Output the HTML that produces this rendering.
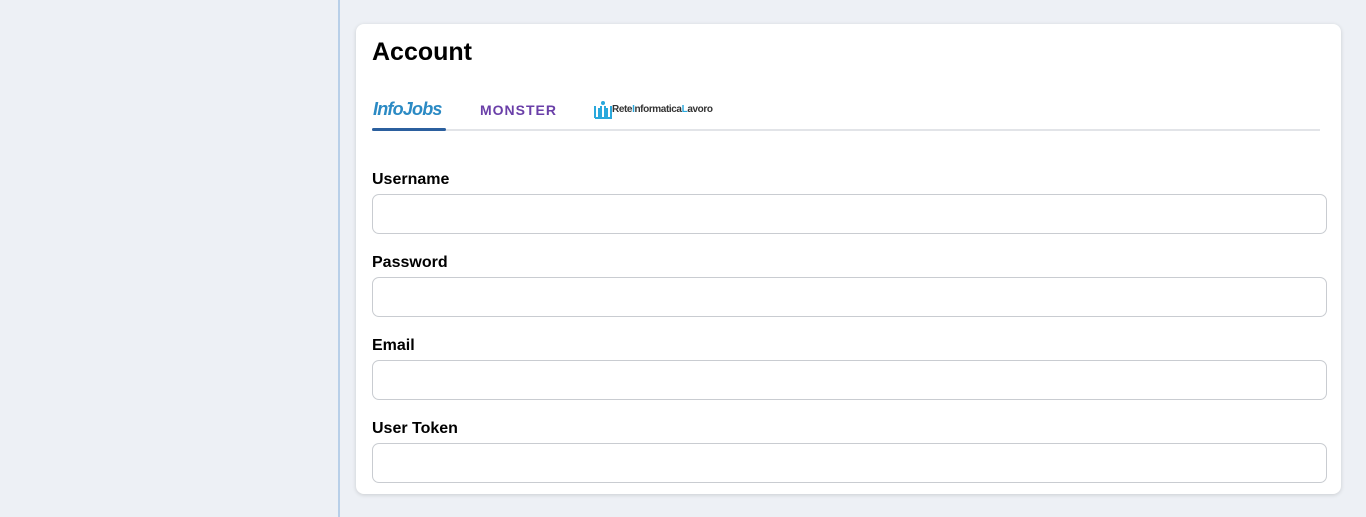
<!DOCTYPE html>
<html><head><style>
body{margin:0;width:1366px;height:517px;background:#edf0f5;font-family:"Liberation Sans",sans-serif;position:relative;overflow:hidden}
.side{position:absolute;left:0;top:0;width:338px;height:517px;background:#edf0f5;border-right:2px solid #b8cfe8}
.card{position:absolute;left:356px;top:24px;width:985px;height:470px;background:#fff;border-radius:8px;box-shadow:0 1px 4px rgba(0,0,0,.15)}
h1{position:absolute;left:16px;top:14px;margin:0;font-size:25px;font-weight:bold;color:#000}
.tabs{position:absolute;left:16px;top:72px;width:948px;height:33px;border-bottom:2px solid #e2e4e8}
.ul{position:absolute;left:0;bottom:-2px;width:74px;height:3px;background:#2b5f9e;border-radius:2px}
label{position:absolute;left:16px;font-size:16px;font-weight:bold;color:#000}
.in{position:absolute;left:16px;width:953px;height:38px;border:1px solid #c9ccd1;border-radius:7px}
</style></head><body>
<div class="side"></div>
<div class="card">
<h1>Account</h1>
<div class="tabs">
<span style="position:absolute;left:1px;top:3px;font-size:18px;font-weight:bold;font-style:italic;color:#2b8ac4;letter-spacing:-0.8px">InfoJobs</span>
<span style="position:absolute;left:108px;top:6px;font-size:14px;font-weight:bold;color:#6a3fa8;letter-spacing:1px">MONSTER</span>
<svg style="position:absolute;left:221px;top:4px" width="22" height="20"><g fill="none" stroke="#2aa8dc" stroke-width="2"><path d="M2 6v12M2 18h4V8M8 6v12h4V6M14 8v10h4V6"/></g><circle cx="10" cy="3" r="2" fill="#2aa8dc"/></svg>
<span style="position:absolute;left:240px;top:8px;font-size:10px;font-weight:bold;color:#333;letter-spacing:-0.4px">Rete<span style="color:#2aa8dc">I</span>nformatica<span style="color:#2aa8dc">L</span>avoro</span>
<div class="ul"></div>
</div>
<label style="top:147px">Username</label><div class="in" style="top:170px"></div>
<label style="top:230px">Password</label><div class="in" style="top:253px"></div>
<label style="top:313px">Email</label><div class="in" style="top:336px"></div>
<label style="top:396px">User Token</label><div class="in" style="top:419px"></div>
</div>
</body></html>
